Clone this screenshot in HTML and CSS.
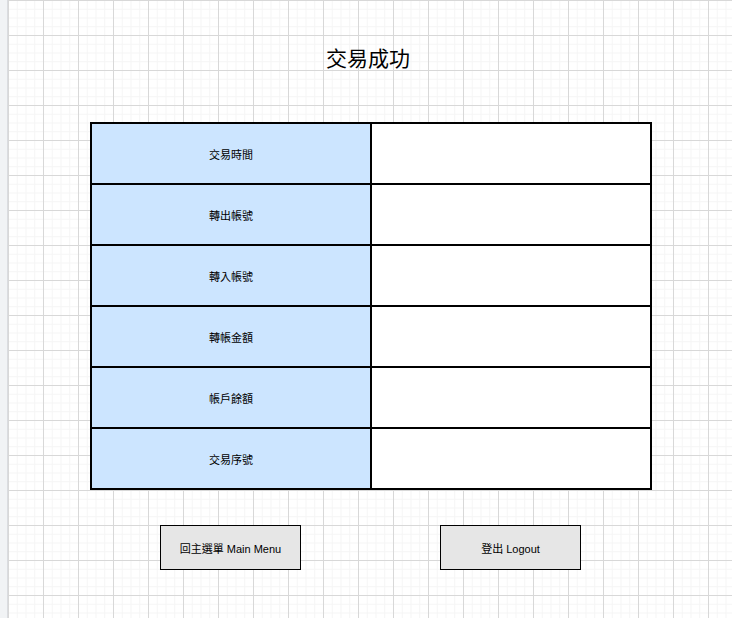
FILE: index.html
```html
<!DOCTYPE html>
<html lang="zh-Hant">
<head>
<meta charset="utf-8">
<title>交易成功</title>
<link rel="stylesheet" href="styles.css">
</head>
<body>
<div class="rail"></div>
<main class="canvas">
  <h1 class="title">交易成功</h1>
  <div class="table">
    <div class="label">交易時間</div><div class="value"></div>
    <div class="label">轉出帳號</div><div class="value"></div>
    <div class="label">轉入帳號</div><div class="value"></div>
    <div class="label">轉帳金額</div><div class="value"></div>
    <div class="label">帳戶餘額</div><div class="value"></div>
    <div class="label">交易序號</div><div class="value"></div>
  </div>
  <div class="actions">
    <div class="slot"><button class="btn">回主選單 Main Menu</button></div>
    <div class="slot"><button class="btn">登出 Logout</button></div>
  </div>
</main>
</body>
</html>
```
FILE: styles.css
```css
html, body {
  margin: 0;
  padding: 0;
  height: 100%;
}
body {
  display: flex;
  font-family: "Liberation Sans", "Noto Sans CJK TC", sans-serif;
  color: #000;
  background-color: #fff;
  background-image:
    linear-gradient(to right, #d8d8d8 1px, transparent 1px),
    linear-gradient(to bottom, #d8d8d8 1px, transparent 1px),
    linear-gradient(to right, #f5f5f5 1px, transparent 1px),
    linear-gradient(to bottom, #f5f5f5 1px, transparent 1px);
  background-size: 35px 35px, 35px 35px, 8.75px 8.75px, 8.75px 8.75px;
  background-position: 8px 0, 8px 0, 8px 0, 8px 0;
  overflow: hidden;
}
.rail {
  width: 7px;
  flex: none;
  background: #f1f3f5;
  border-right: 1px solid #dadce0;
}
.canvas {
  flex: 1;
  display: flex;
  flex-direction: column;
  align-items: flex-start;
  padding-left: 82px;
  padding-top: 44px;
}
.title {
  margin: 0;
  width: 556px;
  text-align: center;
  font-family: "Noto Sans CJK TC", sans-serif;
  font-weight: normal;
  font-size: 21px;
  line-height: 26px;
  height: 26px;
}
.table {
  margin-top: 52px;
  width: 562px;
  box-sizing: border-box;
  display: grid;
  grid-template-columns: 278px 278px;
  grid-auto-rows: 59px;
  gap: 2px;
  padding: 2px;
  background: #000;
}
.label {
  background: #cce5ff;
  display: flex;
  align-items: center;
  justify-content: center;
  font-size: 11px;
  font-family: "Noto Sans CJK TC", sans-serif;
}
.value {
  background: #fff;
}
.actions {
  margin-top: 35px;
  width: 562px;
  display: grid;
  grid-template-columns: 281px 279px;
}
.slot {
  display: flex;
  justify-content: center;
}
.btn {
  width: 141px;
  height: 45px;
  box-sizing: border-box;
  background: #e6e6e6;
  border: 1px solid #000;
  border-radius: 0;
  padding: 0;
  font-family: "Liberation Sans", "Noto Sans CJK TC", sans-serif;
  font-size: 11px;
  color: #000;
}
```
